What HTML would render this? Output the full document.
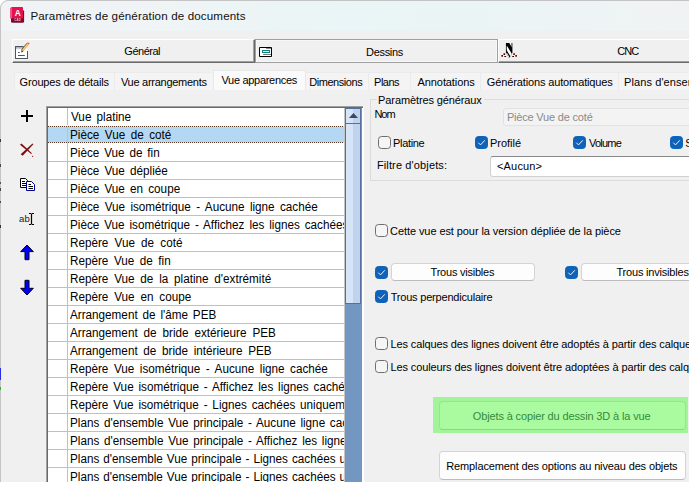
<!DOCTYPE html>
<html lang="fr">
<head>
<meta charset="utf-8">
<title>Paramètres de génération de documents</title>
<style>
html,body{margin:0;padding:0;}
body{width:689px;height:482px;overflow:hidden;background:#f0f0f0;position:relative;
 font-family:"Liberation Sans",sans-serif;font-size:11px;letter-spacing:-0.12px;color:#000;}
.abs{position:absolute;white-space:nowrap;}
.t{position:absolute;white-space:pre;line-height:normal;}
.lt{font-size:12px;letter-spacing:0;display:inline-block;transform-origin:0 0;transform:scaleX(0.975);}
#titlebar{position:absolute;left:0;top:0;width:689px;height:31px;border-radius:8px 0 0 0;background:linear-gradient(90deg,#f1f3f5 0%,#eff4f5 25%,#e9f5f6 50%,#ecf4f5 75%,#f0f3f3 100%);}
#winborder{position:absolute;left:0;top:0;width:700px;height:500px;border:1px solid #c4c4c4;border-radius:8px 0 0 0;box-sizing:border-box;}
.bigtab{position:absolute;top:39px;height:24px;box-sizing:border-box;background:#f0f0f0;text-align:center;line-height:22px;}
.raised{border-top:1px solid #fff;border-left:1px solid #fff;border-right:1px solid #696969;border-bottom:1px solid #696969;}
.raised:after{content:"";position:absolute;left:0;top:0;right:0;bottom:0;border-right:1px solid #a0a0a0;border-bottom:1px solid #a0a0a0;}
.flat{border:1px solid #a0a0a0;}
.flat:after{content:"";position:absolute;left:0;top:0;right:0;bottom:0;border:1px solid #f7f7f7;}
.sunken{border-top:1px solid #696969;border-left:1px solid #696969;border-right:1px solid #fff;border-bottom:1px solid #fff;}
.sunken:after{content:"";position:absolute;left:0;top:0;right:0;bottom:0;border-left:1px solid #a0a0a0;border-top:1px solid #a0a0a0;}
.tab{position:absolute;white-space:nowrap;overflow:hidden;top:72px;height:18px;box-sizing:border-box;background:#f4f4f4;border:1px solid #ebebeb;border-bottom:none;line-height:18px;text-align:center;}
.tab.active{top:70px;height:20px;background:#fafafa;border-color:#e8e8e8;line-height:18px;}
#list{position:absolute;left:46px;top:106px;width:318px;height:380px;box-sizing:border-box;background:#fff;border-left:2px solid #696969;border-top:2px solid #696969;overflow:hidden;}
#list .inner{position:absolute;left:0;top:0;width:296px;height:400px;overflow:hidden;}
.row{position:absolute;left:0;width:297px;height:18px;box-sizing:border-box;border-bottom:1px solid #c0c0c0;white-space:nowrap;overflow:hidden;}

.row.sel{background:#b4d7f3;border-bottom:1px solid #fff;}
.dot{position:absolute;left:0;width:297px;height:1px;background:repeating-linear-gradient(90deg,#5a3c28 0,#5a3c28 1px,#cfe2f3 1px,#cfe2f3 2px);}
#colsep{position:absolute;left:19px;top:0;width:1px;height:400px;background:#c0c0c0;}
#sb{position:absolute;left:297px;top:0;width:17px;height:400px;background:#7497c1;}
.cb{position:absolute;width:13px;height:13px;box-sizing:border-box;border:1px solid #6e6e6e;border-radius:3.5px;background:#f5f5f5;}
.cb.on{background:#0f62b9;border-color:#0f62b9;}
.cb.on svg{position:absolute;left:-1px;top:-1px;}
.btn{position:absolute;box-sizing:border-box;border:1px solid #d4d4d4;border-bottom-color:#bcbcbc;border-radius:4px;background:#fdfdfd;text-align:center;white-space:nowrap;overflow:hidden;}
</style>
</head>
<body>
<div class="abs" style="left:0;top:0;width:9px;height:9px;background:#fff"></div>
<div id="titlebar"></div>
<span class="t" style="left:30.4px;top:9px;font-size:11.6px;letter-spacing:0.139px;color:#111;">Paramètres de génération de documents</span>

<!-- app icon -->
<svg class="abs" style="left:9px;top:6px" width="17" height="18" viewBox="0 0 17 18">
 <path d="M2 5.500 Q2 4 3.500 4 H13.600 Q15.100 4 15.100 5.500 V15.300 Q15.100 16.800 13.600 16.800 H3.500 Q2 16.800 2 15.300 Z" fill="#7c0a2b"/>
 <path d="M1 2.200 L3 1 H13.200 Q14 1 14 1.800 V12.200 H1 Z" fill="#e5134c"/>
 <path d="M1 2.200 L3 1 V12.200 H1 Z" fill="#ef5581"/>
 <text x="8.700" y="9.800" font-family="Liberation Sans, sans-serif" font-weight="bold" font-size="8.400" fill="#fff" text-anchor="middle">A</text>
 <text x="8.600" y="15.300" font-family="Liberation Sans, sans-serif" font-weight="bold" font-size="2.900" fill="#f0c0cc" text-anchor="middle" letter-spacing="0.200">CAD</text>
</svg>

<!-- big tabs -->
<div class="bigtab raised" style="left:12px;width:243px;"></div>
<div class="bigtab flat" style="left:255px;width:243px;"></div>
<div class="bigtab raised" style="left:498px;width:260px;"></div>
<span class="t" style="left:124.35px;top:45px;font-size:11px;letter-spacing:-0.5px;">Général</span><span class="t" style="left:366.1px;top:46px;font-size:11px;letter-spacing:-0.333px;">Dessins</span><span class="t" style="left:617.3px;top:45px;font-size:11px;letter-spacing:-1.0px;">CNC</span>

<!-- icon general -->
<svg class="abs" style="left:15px;top:42px" width="17" height="18" viewBox="0 0 17 18">
 <path d="M8.500 4.500H0.500V16.500H12.500V9" fill="#fff" stroke="#4d5560"/>
 <path d="M1 4.500H12V16H1Z" fill="#fff" stroke="none"/>
 <path d="M8.500 4.500H0.500V16.500H12.500V9" fill="none" stroke="#4d5560"/>
 <rect x="1" y="5" width="7.500" height="1.700" fill="#aab4c0"/>
 <path d="M3 10.500h1.700M3 13.500h6.800" stroke="#4d5560"/>
 <path d="M6.600 8 L11.900 1.400 L13.700 2.800 L8.400 9.400Z" fill="#f2b234"/>
 <path d="M7.500 8.500 L12.700 2" stroke="#fdeaa8" stroke-width="0.700"/>
 <path d="M6.500 7.900 L11.800 1.300" stroke="#3a4048" stroke-width="0.800"/>
 <path d="M11.900 1.400 L12.900 0.100 L14.700 1.500 L13.700 2.800Z" fill="#ee6a72"/>
 <path d="M6.200 10.400 L6.600 8 L8.400 9.400Z" fill="#2a2a2a"/>
</svg>
<!-- icon dessins -->
<svg class="abs" style="left:259px;top:47px" width="14" height="10" viewBox="0 0 14 10">
 <path d="M0.500 0.500H12.500V9.500H0.500Z" fill="#fff" stroke="#000"/>
 <path d="M7 1.500h5" stroke="#8a8a8a"/>
 <rect x="3.500" y="3.500" width="7" height="2" fill="#e8f6f6" stroke="#0f8080"/>
 <path d="M4 7.500h8" stroke="#777"/>
</svg>
<!-- icon cnc -->
<svg class="abs" style="left:501px;top:42px" width="17" height="17" viewBox="0 0 17 17">
 <defs><clipPath id="dr"><path d="M5 1 H11.200 V11 L8.600 15.700 H7.800 L5.200 11 Z"/></clipPath></defs>
 <g clip-path="url(#dr)">
  <rect x="0" y="0" width="17" height="17" fill="#000"/>
  <path d="M8.600 -1 L12.800 6" stroke="#fff" stroke-width="2.600"/>
  <path d="M5 4.600 L11 14.600" stroke="#fff" stroke-width="2.500"/>
  <path d="M5 11 L9 17.600" stroke="#fff" stroke-width="1.600"/>
 </g>
 <path d="M5.400 1V11.200M10.850 1V11" stroke="#000" stroke-width="0.750"/>
 <g fill="#4a0000"><rect x="0.400" y="13" width="1.600" height="1.700"/><rect x="2.500" y="11.300" width="1.600" height="1.700"/><rect x="3.300" y="14" width="1.800" height="1"/>
 <rect x="11.200" y="14" width="1.800" height="1"/><rect x="12.300" y="11.300" width="1.600" height="1.700"/><rect x="14.300" y="13" width="1.600" height="1.700"/></g>
</svg>

<!-- small tabs -->
<div class="tab" style="left:14px;width:101px;"></div>
<div class="tab" style="left:114px;width:101px;"></div>
<div class="tab" style="left:305px;width:64px;"></div>
<div class="tab" style="left:368px;width:43px;"></div>
<div class="tab" style="left:410px;width:71px;"></div>
<div class="tab" style="left:480px;width:139px;"></div>
<div class="tab" style="left:618px;width:90px;"></div>
<div class="tab active" style="left:213px;width:93px;"></div>
<span class="t" style="left:19.6px;top:76px;font-size:11px;letter-spacing:-0.176px;">Groupes de détails</span><span class="t" style="left:120.9px;top:76px;font-size:11px;letter-spacing:-0.267px;">Vue arrangements</span><span class="t" style="left:221.5px;top:74px;font-size:11px;letter-spacing:-0.308px;">Vue apparences</span><span class="t" style="left:309.2px;top:76px;font-size:11px;letter-spacing:-0.444px;">Dimensions</span><span class="t" style="left:374.1px;top:76px;font-size:11px;letter-spacing:-0.5px;">Plans</span><span class="t" style="left:417.6px;top:76px;font-size:11px;letter-spacing:-0.1px;">Annotations</span><span class="t" style="left:486.8px;top:76px;font-size:11px;letter-spacing:-0.13px;">Générations automatiques</span><span class="t" style="left:624.1px;top:76px;font-size:11px;letter-spacing:0.091px;">Plans d'ensemble</span>

<!-- left icons -->
<svg class="abs" style="left:20px;top:109px" width="14" height="14" viewBox="0 0 14 14"><path d="M7 1v12M1 7h12" stroke="#000" stroke-width="2"/></svg>
<svg class="abs" style="left:20px;top:143px" width="14" height="15" viewBox="0 0 14 15">
 <path d="M12.500 0.600 L13.400 1.300 L2.700 12.700 L0.700 11.200Z" fill="#7e0c0c"/>
 <path d="M0 1.800 L1.500 0.500 L11.900 10.300 L11.200 11Z" fill="#7e0c0c"/>
 <circle cx="12.600" cy="13.300" r="0.650" fill="#7e0c0c"/>
</svg>
<svg class="abs" style="left:19px;top:177px" width="17" height="15" viewBox="0 0 17 15">
 <path d="M1.500 1.500H6.500L8.500 3.500V10.500H1.500Z" fill="#fff" stroke="#000"/>
 <path d="M3 4.500h3M3 6.500h4M3 8.500h4" stroke="#000"/>
 <path d="M7.500 4.500H12.500L15.500 7.500V13.500H7.500Z" fill="#fff" stroke="#000090"/>
 <path d="M9.500 7.500h2.500M9.500 9.500h4.500M9.500 11.500h4.500" stroke="#000"/>
</svg>
<div class="abs" style="left:19px;top:213px;font-size:9.500px;line-height:12px;letter-spacing:0.200px;color:#1a1a1a">ab</div>
<svg class="abs" style="left:28px;top:212px" width="8" height="14" viewBox="0 0 8 14"><path d="M1 1.500h2M4 1.500h2M3.500 1.500v11M1 12.500h2M4 12.500h2" stroke="#000" stroke-width="1.200" fill="none"/></svg>
<svg class="abs" style="left:19px;top:244px" width="16" height="17" viewBox="0 0 16 17"><path d="M8 1 L14.300 7.600 H10 V15.700 H6 V7.600 H1.700 Z" fill="#0000ff" stroke="#000018" stroke-width="1"/></svg>
<svg class="abs" style="left:19px;top:279px" width="16" height="17" viewBox="0 0 16 17"><path d="M8 16 L14.300 9.300 H10 V1.300 H6 V9.300 H1.700 Z" fill="#0000ff" stroke="#000018" stroke-width="1"/></svg>

<!-- list -->
<div id="list">
 <div class="inner">
<div class="row" style="top:0px"><span class="t lt" style="left:22.9px;top:2px;word-spacing:2.0px">Vue platine</span></div>
<div class="row sel" style="top:18px"><span class="t lt" style="left:21.9px;top:2px;word-spacing:2.333px">Pièce Vue de coté</span></div>
<div class="row" style="top:36px"><span class="t lt" style="left:21.9px;top:2px;word-spacing:1.667px">Pièce Vue de fin</span></div>
<div class="row" style="top:54px"><span class="t lt" style="left:21.9px;top:2px;word-spacing:2.0px">Pièce Vue dépliée</span></div>
<div class="row" style="top:72px"><span class="t lt" style="left:21.9px;top:2px;word-spacing:2.0px">Pièce Vue en coupe</span></div>
<div class="row" style="top:90px"><span class="t lt" style="left:21.9px;top:2px;word-spacing:2.167px">Pièce Vue isométrique - Aucune ligne cachée</span></div>
<div class="row" style="top:108px"><span class="t lt" style="left:21.9px;top:2px;word-spacing:1.714px">Pièce Vue isométrique - Affichez les lignes cachées</span></div>
<div class="row" style="top:126px"><span class="t lt" style="left:21.9px;top:2px;word-spacing:3.0px">Repère Vue de coté</span></div>
<div class="row" style="top:144px"><span class="t lt" style="left:21.9px;top:2px;word-spacing:2.333px">Repère Vue de fin</span></div>
<div class="row" style="top:162px"><span class="t lt" style="left:21.9px;top:2px;word-spacing:2.6px">Repère Vue de la platine d'extrémité</span></div>
<div class="row" style="top:180px"><span class="t lt" style="left:21.9px;top:2px;word-spacing:2.667px">Repère Vue en coupe</span></div>
<div class="row" style="top:198px"><span class="t lt" style="left:22.1px;top:2px;word-spacing:1.667px">Arrangement de l'âme PEB</span></div>
<div class="row" style="top:216px"><span class="t lt" style="left:22.1px;top:2px;word-spacing:2.75px">Arrangement de bride extérieure PEB</span></div>
<div class="row" style="top:234px"><span class="t lt" style="left:22.1px;top:2px;word-spacing:2.5px">Arrangement de bride intérieure PEB</span></div>
<div class="row" style="top:252px"><span class="t lt" style="left:21.9px;top:2px;word-spacing:2.333px">Repère Vue isométrique - Aucune ligne cachée</span></div>
<div class="row" style="top:270px"><span class="t lt" style="left:21.9px;top:2px;word-spacing:1.667px">Repère Vue isométrique - Affichez les lignes cachées</span></div>
<div class="row" style="top:288px"><span class="t lt" style="left:21.9px;top:2px;word-spacing:1.6px">Repère Vue isométrique - Lignes cachées uniquement</span></div>
<div class="row" style="top:306px"><span class="t lt" style="left:21.9px;top:2px;word-spacing:1.5px">Plans d'ensemble Vue principale - Aucune ligne cachée</span></div>
<div class="row" style="top:324px"><span class="t lt" style="left:21.9px;top:2px;word-spacing:1.5px">Plans d'ensemble Vue principale - Affichez les lignes cachées</span></div>
<div class="row" style="top:342px"><span class="t lt" style="left:21.9px;top:2px;word-spacing:0.833px">Plans d'ensemble Vue principale - Lignes cachées uniquement</span></div>
<div class="row" style="top:360px"><span class="t lt" style="left:21.9px;top:2px;word-spacing:0.833px">Plans d'ensemble Vue principale - Lignes cachées uniquement</span></div>

  <div id="colsep"></div>

  <div class="dot" style="top:17px;background:#fff"></div><div class="dot" style="top:18px"></div><div class="dot" style="top:34px"></div>
 </div>
 <div style="position:absolute;left:296px;top:0;width:1px;height:400px;background:#c4c4c4"></div>
 <div id="sb">
  <div style="position:absolute;left:0;top:0;width:16px;height:196px;background:#56709c;"></div>
  <div style="position:absolute;left:1px;top:1px;width:14px;height:14px;background:linear-gradient(90deg,#d6e4f7 0,#d6e4f7 50%,#bfd3ef 50%,#bfd3ef 100%);"></div>
  <div style="position:absolute;left:1px;top:16px;width:14px;height:179px;background:linear-gradient(90deg,#d6e4f7 0,#d6e4f7 50%,#bfd3ef 50%,#bfd3ef 100%);"></div>
  <svg style="position:absolute;left:4px;top:5px" width="9" height="5" viewBox="0 0 9 5"><path d="M0 5L4.500 0L9 5Z" fill="#3c4860"/></svg>
 </div>
</div>

<!-- group box -->
<div class="abs" style="left:370px;top:99px;width:340px;height:82px;box-sizing:border-box;border:1px solid #dcdcdc;"></div>
<div class="abs" style="left:377px;top:94px;width:107px;height:12px;background:#f0f0f0;"></div>
<span class="t" style="left:378.1px;top:94px;font-size:11px;letter-spacing:-0.111px;">Paramètres généraux</span><span class="t" style="left:374.4px;top:108px;font-size:11px;letter-spacing:-1.0px;">Nom</span>
<div class="abs" style="left:503px;top:108px;width:200px;height:18px;box-sizing:border-box;border:1px solid #e2e2e2;background:#f3f3f3;border-radius:3px;"></div>
<span class="t" style="left:506.9px;top:111px;font-size:11px;letter-spacing:-0.188px;color:#8a8a8a;">Pièce Vue de coté</span>

<div class="cb" style="left:378px;top:136px"></div><span class="t" style="left:393.1px;top:137px;font-size:11px;letter-spacing:-0.333px;">Platine</span>
<div class="cb on" style="left:475px;top:136px"><svg width="13" height="13" viewBox="0 0 13 13"><path d="M3.300 6.700L5.500 8.900L9.800 4.300" stroke="#eef4fb" stroke-width="1" fill="none"/></svg></div><span class="t" style="left:489.9px;top:137px;font-size:11px;letter-spacing:0.0px;">Profilé</span>
<div class="cb on" style="left:573px;top:136px"><svg width="13" height="13" viewBox="0 0 13 13"><path d="M3.300 6.700L5.500 8.900L9.800 4.300" stroke="#eef4fb" stroke-width="1" fill="none"/></svg></div><span class="t" style="left:589.1px;top:137px;font-size:11px;letter-spacing:-0.8px;">Volume</span>
<div class="cb on" style="left:670px;top:136px"><svg width="13" height="13" viewBox="0 0 13 13"><path d="M3.300 6.700L5.500 8.900L9.800 4.300" stroke="#eef4fb" stroke-width="1" fill="none"/></svg></div><span class="t" style="left:685.2px;top:137px;font-size:11px;letter-spacing:-0.333px;">Soudure</span>

<span class="t" style="left:376.9px;top:159px;font-size:11px;letter-spacing:0.133px;">Filtre d'objets:</span>
<div class="abs" style="left:490px;top:156px;width:220px;height:21px;box-sizing:border-box;border:1px solid #d0d0d0;border-top-color:#8a8a8a;background:#fff;border-radius:3px;"></div>
<span class="t" style="left:497.0px;top:160px;font-size:11px;letter-spacing:0.167px;">&lt;Aucun&gt;</span>

<div class="cb" style="left:375px;top:224px"></div><span class="t" style="left:390.1px;top:225px;font-size:11px;letter-spacing:-0.083px;">Cette vue est pour la version dépliée de la pièce</span>

<div class="cb on" style="left:375px;top:266px"><svg width="13" height="13" viewBox="0 0 13 13"><path d="M3.300 6.700L5.500 8.900L9.800 4.300" stroke="#eef4fb" stroke-width="1" fill="none"/></svg></div>
<div class="btn" style="left:391px;top:263px;width:144px;height:18px;"></div><span class="t" style="left:430.6px;top:266px;font-size:11px;letter-spacing:-0.231px;">Trous visibles</span>
<div class="cb on" style="left:565px;top:266px"><svg width="13" height="13" viewBox="0 0 13 13"><path d="M3.300 6.700L5.500 8.900L9.800 4.300" stroke="#eef4fb" stroke-width="1" fill="none"/></svg></div>
<div class="btn" style="left:581px;top:263px;width:144px;height:18px;"></div><span class="t" style="left:616.5px;top:266px;font-size:11px;letter-spacing:-0.2px;">Trous invisibles</span>

<div class="cb on" style="left:375px;top:290px"><svg width="13" height="13" viewBox="0 0 13 13"><path d="M3.300 6.700L5.500 8.900L9.800 4.300" stroke="#eef4fb" stroke-width="1" fill="none"/></svg></div><span class="t" style="left:390.7px;top:291px;font-size:11px;letter-spacing:-0.2px;">Trous perpendiculaire</span>

<div class="cb" style="left:375px;top:337px"></div><span class="t" style="left:390.4px;top:338px;font-size:11px;letter-spacing:-0.109px;">Les calques des lignes doivent être adoptés à partir des calques</span>
<div class="cb" style="left:375px;top:360px"></div><span class="t" style="left:390.4px;top:361px;font-size:11px;letter-spacing:-0.105px;">Les couleurs des lignes doivent être adoptées à partir des calques</span>

<div class="abs" style="left:433px;top:397px;width:255px;height:36px;background:#a1f598;"></div>
<div class="btn" style="left:439px;top:401px;width:247px;height:29px;background:#aafaa0;border-color:#94e68b;border-bottom-color:#88da80;"></div><span class="t" style="left:472.8px;top:410px;font-size:11px;letter-spacing:-0.139px;color:#358a3c;">Objets à copier du dessin 3D à la vue</span>
<div class="btn" style="left:439px;top:451px;width:247px;height:29px;"></div><span class="t" style="left:446.3px;top:460px;font-size:11px;letter-spacing:-0.136px;">Remplacement des options au niveau des objets</span>

<div class="abs" style="left:46px;top:106px;width:317px;height:1px;background:#a0a0a0"></div><div class="abs" style="left:46px;top:106px;width:1px;height:380px;background:#a0a0a0"></div>
<div class="abs" style="left:363px;top:106px;width:1px;height:380px;background:#fff"></div>
<div id="winborder"></div>
<div class="abs" style="left:0;top:139px;width:1px;height:3px;background:#3a3a3a"></div><div class="abs" style="left:0;top:164px;width:1px;height:3px;background:#4a4a4a"></div><div class="abs" style="left:0;top:182px;width:1px;height:2px;background:#555"></div><div class="abs" style="left:0;top:188px;width:1px;height:3px;background:#444"></div><div class="abs" style="left:0;top:201px;width:1px;height:2px;background:#4a4a4a"></div><div class="abs" style="left:0;top:225px;width:1px;height:3px;background:#333"></div><div class="abs" style="left:0;top:368px;width:1px;height:12px;background:#2c2ce0"></div><div class="abs" style="left:0;top:387px;width:1px;height:3px;background:#22c022"></div>
</body>
</html>
